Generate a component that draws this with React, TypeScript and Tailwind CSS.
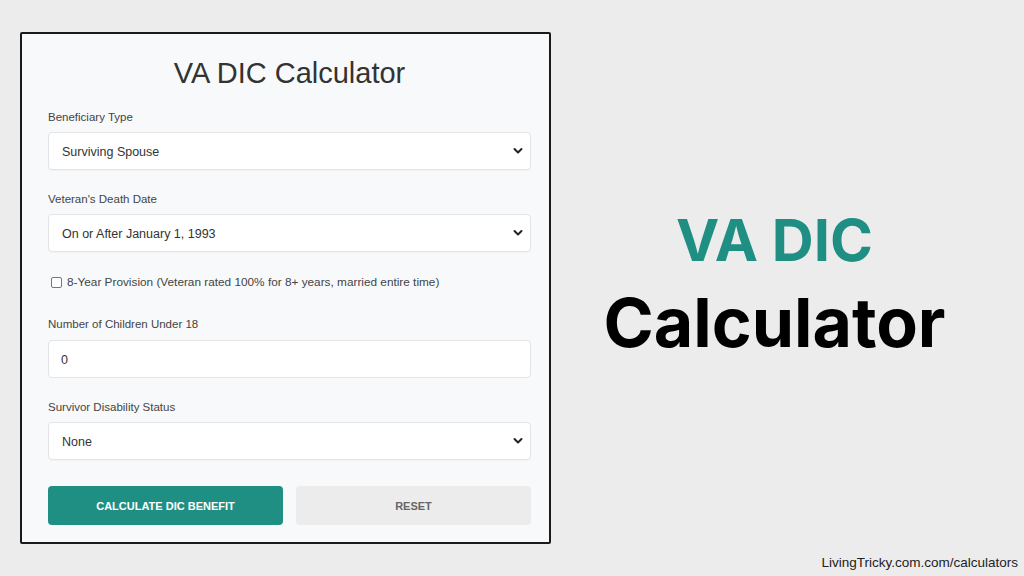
import { useState } from "react";

const font = { fontFamily: '"Liberation Sans", Arial, sans-serif' };

function Chevron() {
  return (
    <svg
      className="pointer-events-none absolute right-[8px] top-1/2 -translate-y-1/2"
      width="10"
      height="7"
      viewBox="0 0 10 7"
    >
      <path d="M1.5 1.5 L5 5 L8.5 1.5" fill="none" stroke="#222" strokeWidth="2" strokeLinecap="round" strokeLinejoin="round" />
    </svg>
  );
}

function SelectField({ value, options }: { value: string; options: string[] }) {
  const [v, setV] = useState(value);
  return (
    <div className="relative">
      <select
        value={v}
        onChange={(e) => setV(e.target.value)}
        className="h-[38px] w-full appearance-none rounded-[4px] border border-[#e3e4e6] bg-white pl-[13px] pt-[2px] text-[12.5px] text-[#333] shadow-[0_1px_1px_rgba(0,0,0,0.03)] outline-none"
      >
        {options.map((o) => (
          <option key={o}>{o}</option>
        ))}
      </select>
      <Chevron />
    </div>
  );
}

function Label({ children }: { children: React.ReactNode }) {
  return <div className="mb-[8px] text-[11.5px] leading-[14px] text-[#444]">{children}</div>;
}

export default function App() {
  return (
    <div className="h-[576px] w-[1024px] overflow-hidden bg-[#ececec]" style={font}>
      <div className="flex pl-[20px] pt-[32px]">
        <div className="h-[512px] w-[531px] rounded-[2px] border-2 border-[#1a1a1a] bg-[#f8f9fa] pl-[26px] pr-[18px] pt-[22px]">
          <h1 className="text-center text-[29px] leading-[34px] text-[#333]">VA DIC Calculator</h1>

          <div className="mt-[20px]">
            <Label>Beneficiary Type</Label>
            <SelectField value="Surviving Spouse" options={["Surviving Spouse", "Surviving Child", "Surviving Parent"]} />
          </div>

          <div className="mt-[22px]">
            <Label>Veteran's Death Date</Label>
            <SelectField value="On or After January 1, 1993" options={["On or After January 1, 1993", "Before January 1, 1993"]} />
          </div>

          <label className="mt-[23px] flex items-center gap-[5px] pl-[3px] text-[11.8px] leading-[14px] text-[#444]">
            <input type="checkbox" className="h-[11px] w-[11px] appearance-none rounded-[2px] border border-[#777] bg-white" />
            8-Year Provision (Veteran rated 100% for 8+ years, married entire time)
          </label>

          <div className="mt-[28px]">
            <div className="mb-[9px] text-[11.5px] leading-[14px] text-[#444]">Number of Children Under 18</div>
            <input
              defaultValue="0"
              className="h-[38px] w-full rounded-[4px] border border-[#e3e4e6] bg-white pl-[12px] pt-[2px] text-[12.5px] text-[#333] outline-none"
            />
          </div>

          <div className="mt-[22px]">
            <Label>Survivor Disability Status</Label>
            <SelectField value="None" options={["None", "Housebound", "Aid and Attendance"]} />
          </div>

          <div className="mt-[26px] grid grid-cols-2 gap-[13px]">
            <button className="h-[39px] rounded-[4px] bg-[#1f8f84] pt-[2px] text-[11px] font-bold text-white">
              CALCULATE DIC BENEFIT
            </button>
            <button className="h-[39px] rounded-[4px] bg-[#ececec] pt-[2px] text-[11px] font-bold text-[#666]">
              RESET
            </button>
          </div>
        </div>

        <div className="flex flex-1 flex-col items-center pr-[26px] pt-[178px]">
          <div
            className="text-[58px] font-bold leading-[60px] text-[#1f8f84]"
            style={{ fontFamily: '"Inter", "Noto Sans", sans-serif' }}
          >
            VA DIC
          </div>
          <div
            className="mt-[12px] text-[68px] font-bold leading-[80px] text-black"
            style={{ fontFamily: '"Inter", "Noto Sans", sans-serif' }}
          >
            Calculator
          </div>
        </div>
      </div>
      <div className="pr-[6px] pt-[11px] text-right text-[13.5px] leading-[16px] text-[#222]">
        LivingTricky.com.com/calculators
      </div>
    </div>
  );
}
